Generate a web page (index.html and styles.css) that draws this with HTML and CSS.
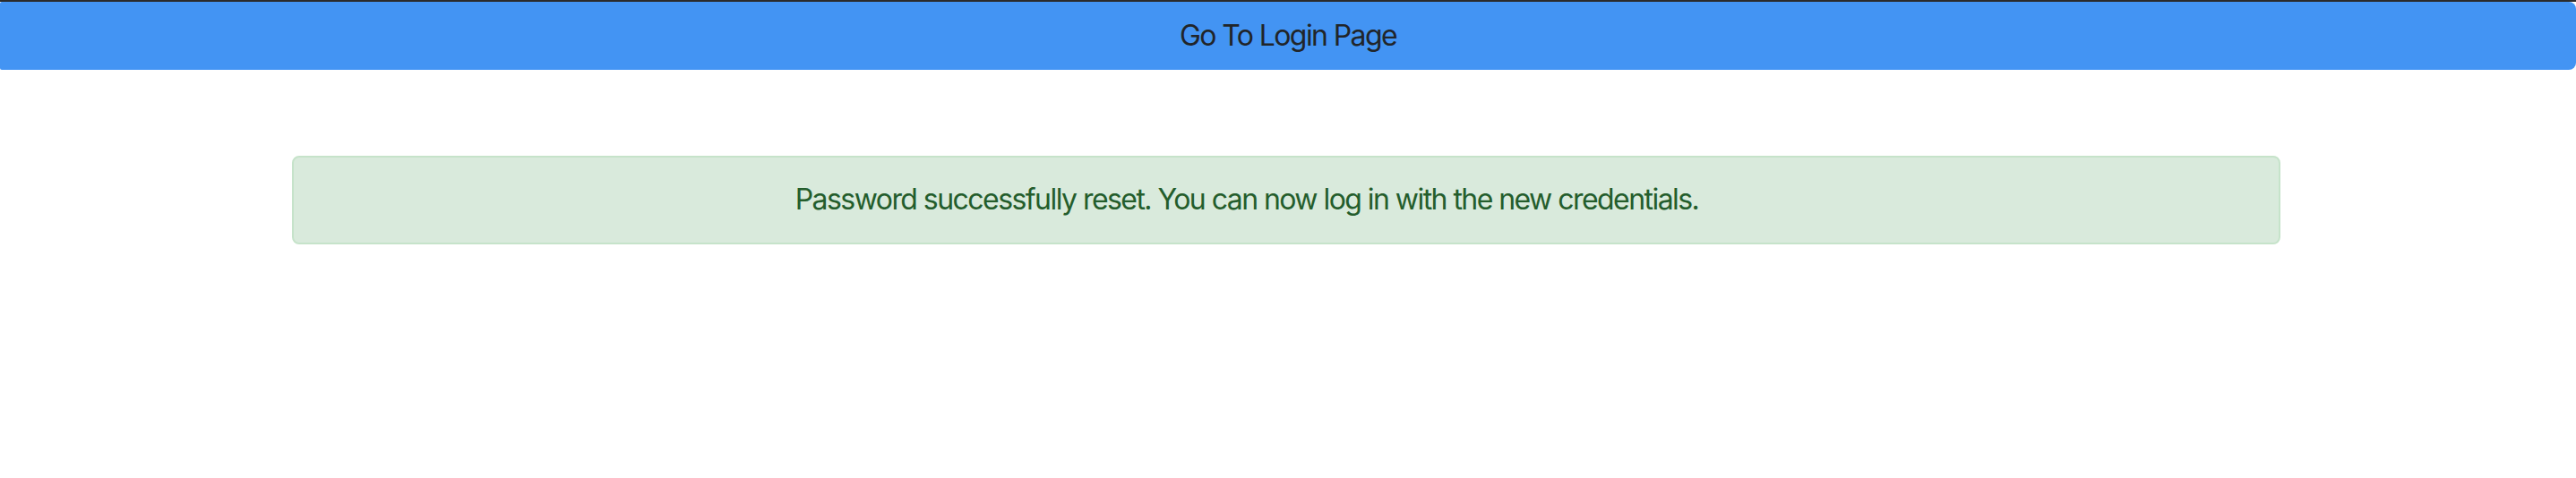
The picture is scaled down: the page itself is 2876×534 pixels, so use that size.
FILE: index.html
```html
<!DOCTYPE html>
<html>
<head>
<meta charset="utf-8">
<link rel="stylesheet" href="styles.css">
</head>
<body>
<div class="topline"></div>
<button class="btn-login" type="button">Go To Login Page</button>
<div class="container">
  <div class="alert">Password successfully reset. You can now log in with the new credentials.</div>
</div>
</body>
</html>
```
FILE: styles.css
```css
html, body {
  margin: 0;
  padding: 0;
  background: #ffffff;
}
body {
  font-family: Inter, "Noto Sans", "Liberation Sans", sans-serif;
  width: 2876px;
}
.topline {
  height: 2px;
  background: #2b2b2b;
}
.btn-login {
  display: block;
  width: 2876px;
  height: 76px;
  margin: 0;
  padding: 0;
  border: none;
  border-radius: 2px 8px 8px 2px;
  background: #4394f3;
  color: #212529;
  font-family: inherit;
  font-size: 32px;
  line-height: 48px;
  text-align: center;
  letter-spacing: -1.6px;
}
.container {
  width: 2220px;
  margin: 96px 0 0 326px;
}
.alert {
  box-sizing: border-box;
  height: 99px;
  border: 2px solid #c6e3ca;
  border-radius: 8px;
  background: #d9eadc;
  color: #245d2c;
  font-size: 32px;
  line-height: 48px;
  padding: 23px 128px 24px 40px;
  text-align: center;
  letter-spacing: -1.55px;
}
```
